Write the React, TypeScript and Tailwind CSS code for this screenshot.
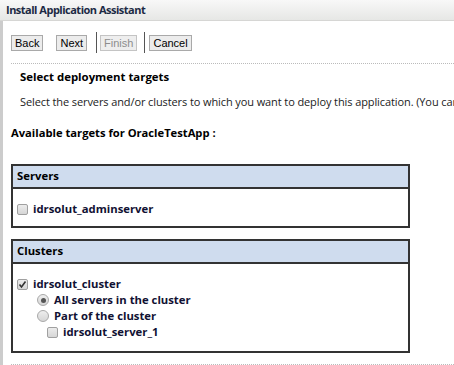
import { ReactNode } from 'react'

function Btn({ children, disabled }: { children: ReactNode; disabled?: boolean }) {
  return (
    <button
      disabled={disabled}
      className={
        'h-[16px] px-[3px] border text-[11px] leading-[14px] ' +
        (disabled ? 'text-[#8d8d8d] bg-[#eeeeee] border-[#c4c4c4]' : 'text-black bg-[#ececec] border-[#a9a9a9]')
      }
      style={{ fontFamily: '"Liberation Sans", Arial, sans-serif' }}
    >
      {children}
    </button>
  )
}

function Check({ checked }: { checked?: boolean }) {
  return (
    <span className="w-[11px] h-[11px] rounded-[2px] border border-[#a0a0a0] bg-gradient-to-b from-[#ececec] to-[#d6d6d6] flex items-center justify-center shrink-0">
      {checked && (
        <svg width="9" height="9" viewBox="0 0 9 9">
          <path d="M1.5 4.5 L3.5 7 L7.5 1.5" stroke="#333" strokeWidth="1.6" fill="none" />
        </svg>
      )}
    </span>
  )
}

function Radio({ checked }: { checked?: boolean }) {
  return (
    <span className="w-[12px] h-[12px] rounded-full border border-[#a8a8a8] bg-gradient-to-b from-[#eeeeee] to-[#d6d6d6] flex items-center justify-center shrink-0">
      {checked && <span className="w-[5px] h-[5px] rounded-full bg-[#555]" />}
    </span>
  )
}

function Row({ indent, control, label }: { indent: string; control: ReactNode; label: string }) {
  return (
    <div className={'flex items-center gap-[5px] h-[16px] ' + indent}>
      {control}
      <span className="font-bold text-[#111133] text-[11.3px]">{label}</span>
    </div>
  )
}

export default function App() {
  return (
    <div
      className="w-[454px] h-[365px] overflow-hidden bg-white text-[11px] text-[#222]"
      style={{ fontFamily: '"Open Sans", "Noto Sans", sans-serif' }}
    >
      <div className="h-[21px] bg-gradient-to-b from-[#f8f8f8] to-[#e6e7e5] border-b border-[#d6d6d4] pl-[6px] flex items-center">
        <span className="font-bold text-[#1c2a44] text-[11px] tracking-[-0.5px]">Install Application Assistant</span>
      </div>
      <div className="flex h-[344px]">
        <div className="w-[3px] bg-[#cccccc] shrink-0" />
        <div className="flex-1 min-w-0 pl-[8px]">
          <div className="flex items-center h-[42px] pt-[1px]">
            <Btn>Back</Btn>
            <div className="w-[13px]" />
            <Btn>Next</Btn>
            <div className="w-[1px] h-[21px] bg-[#555] ml-[9px] mr-[3px]" />
            <Btn disabled>Finish</Btn>
            <div className="w-[1px] h-[21px] bg-[#555] ml-[7px] mr-[4px]" />
            <Btn>Cancel</Btn>
          </div>
          <div className="border-t border-dotted border-[#bbb]" />
          <div className="pl-[9px] pt-[3px]">
            <div className="font-bold text-black h-[20px] leading-[20px] text-[11.4px]">Select deployment targets</div>
            <div className="whitespace-nowrap mt-[7px] text-[#222] tracking-[-0.1px]">
              Select the servers and/or clusters to which you want to deploy this application. (You can reconfigure deployment targets later).
            </div>
          </div>
          <div className="font-bold text-black mt-[14px] text-[11.2px]">Available targets for OracleTestApp :</div>

          <div className="w-[399px] mt-[23px] border-2 border-[#333]">
            <div className="h-[23px] bg-[#cfdcee] border-b-2 border-[#333] pl-[4px] flex items-center font-bold text-black text-[11.3px]">Servers</div>
            <div className="h-[37px] pl-[4px] pt-[12px]">
              <Row indent="" control={<Check />} label="idrsolut_adminserver" />
            </div>
          </div>

          <div className="w-[399px] mt-[11px] border-2 border-[#333]">
            <div className="h-[23px] bg-[#cfdcee] border-b-2 border-[#333] pl-[4px] flex items-center font-bold text-black text-[11.3px]">Clusters</div>
            <div className="h-[87px] pl-[4px] pt-[12px]">
              <Row indent="" control={<Check checked />} label="idrsolut_cluster" />
              <Row indent="pl-[20px]" control={<Radio checked />} label="All servers in the cluster" />
              <Row indent="pl-[20px]" control={<Radio />} label="Part of the cluster" />
              <Row indent="pl-[30px]" control={<Check />} label="idrsolut_server_1" />
            </div>
          </div>
          <div className="border-t border-dotted border-[#bbb] mt-[11px]" />
        </div>
      </div>
    </div>
  )
}
